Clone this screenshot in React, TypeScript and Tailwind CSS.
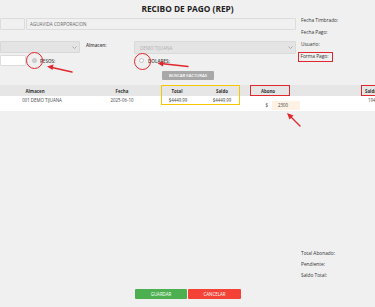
import React from "react";

function Chevron({ className = "" }: { className?: string }) {
  return (
    <svg className={className} width="5" height="3" viewBox="0 0 5 3" fill="none">
      <path d="M0.5 0.5 L2.5 2.5 L4.5 0.5" stroke="#9a9a9a" strokeWidth="0.7" />
    </svg>
  );
}

export default function App() {
  return (
    <div className="relative h-[307px] w-[375px] overflow-hidden bg-[#f0f0f0] font-['Open_Sans',sans-serif] text-[#333]">
      <div className="h-[17px] pt-[2px] text-center text-[8.3px] font-bold leading-[13px] text-[#222]">
        RECIBO DE PAGO (REP)
      </div>

      <div className="flex items-start">
        {/* left main */}
        <div className="w-[296px]">
          <div className="mt-[1px] flex h-[12px] gap-[1px]">
            <div className="w-[25px] rounded-[1px] border border-[#dcdcdc] bg-[#f0f0f0]" />
            <div className="flex flex-1 items-center rounded-[1px] border border-[#dcdcdc] bg-[#f0f0f0] pl-[3px] text-[4.6px] leading-[6px] text-[#666]">
              AGUAVIDA CORPORACION
            </div>
          </div>

          <div className="mt-[11px] flex h-[12px] items-start">
            <div className="flex h-[12px] w-[80px] items-center justify-end rounded-[1px] border border-[#d8d8d8] bg-[#e4e4e4] pr-[2px]">
              <Chevron />
            </div>
            <div className="w-[54px] pl-[6px] pt-[1px] text-[4.6px] font-semibold leading-[6px] text-[#444]">Almacen:</div>
            <div className="flex h-[13px] flex-1 items-center justify-between rounded-[1px] border border-[#dadada] bg-[#e4e4e4] pl-[5px] pr-[2px] text-[4.6px] leading-[6px] text-[#b0b0b0]">
              <span>DEMO TIJUANA</span>
              <Chevron />
            </div>
          </div>

          <div className="mt-[2px] flex h-[11px] items-center">
            <div className="h-[11px] w-[26px] rounded-[1px] border border-[#dcdcdc] bg-white" />
            <div className="flex w-[113px] items-center">
              <div className="ml-[6px] h-[5px] w-[5px] rounded-full border border-[#c4c4c4] bg-[#cfcfcf]" />
              <span className="ml-[3px] text-[4.6px] font-semibold leading-[6px] text-[#444]">PESOS:</span>
            </div>
            <div className="h-[5px] w-[5px] rounded-full border border-[#c4c4c4] bg-white" />
            <span className="ml-[4px] text-[4.6px] font-semibold leading-[6px] text-[#444]">DOLARES:</span>
          </div>

          <div className="ml-[162px] mt-[5px] flex h-[9px] w-[52px] items-center justify-center rounded-[1px] bg-[#a8a8a8] text-[4.2px] font-semibold leading-[5px] text-white">
            BUSCAR FACTURAS
          </div>
        </div>

        {/* right column */}
        <div className="flex-1 pl-[2px] text-[4.8px] leading-[8px] text-[#333]">
          <div className="-mt-[1px] h-[8px] pl-[3px]">Fecha Timbrado:</div>
          <div className="mt-[4px] h-[8px] pl-[3px]">Fecha Pago:</div>
          <div className="mt-[3.5px] h-[8px] pl-[3px]">Usuario:</div>
          <div className="mt-[4.5px] h-[10px] w-[35px] border-[1.5px] border-[#e0282e] pl-[1.5px] leading-[7px]">Forma Pago:</div>
        </div>
      </div>

      {/* table */}
      <div className="relative mt-[5px] w-[375px] overflow-hidden whitespace-nowrap">
        <div className="flex h-[11px] items-center bg-[#e6e6e6] text-[4.4px] font-bold leading-[6px] text-[#333]">
          <div className="w-[84px] shrink-0 pr-[14px] text-center">Almacen</div>
          <div className="w-[76px] shrink-0 text-center">Fecha</div>
          <div className="w-[36px] shrink-0 pr-[2px] text-center">Total</div>
          <div className="w-[52px] shrink-0 text-center">Saldo</div>
          <div className="w-[52px] shrink-0 pr-[12px] text-center">Abono</div>
          <div className="w-[61px] shrink-0" />
          <div className="shrink-0 pl-[4px]">Saldo</div>
        </div>
        <div className="flex h-[15px] items-start bg-white text-[4.4px] leading-[5px] text-[#444]">
          <div className="w-[84px] shrink-0 pt-[1.5px] text-center">001 DEMO TIJUANA</div>
          <div className="w-[76px] shrink-0 pt-[1.5px] text-center">2025-06-10</div>
          <div className="w-[36px] shrink-0 pt-[1.5px] text-center">$4449.99</div>
          <div className="w-[52px] shrink-0 pt-[1.5px] text-center">$4449.99</div>
          <div className="flex w-[52px] shrink-0 items-center justify-end pt-[5px]">
            <span className="mr-[4px]">$</span>
            <div className="flex h-[9px] w-[28px] items-center bg-[#fdf2e4] pl-[6px]">2300</div>
          </div>
          <div className="w-[61px] shrink-0" />
          <div className="shrink-0 pl-[7px] pt-[1.5px]">1940.00</div>
        </div>

        <div className="absolute left-[161px] top-0 h-[20px] w-[79px] border-[1.5px] border-[#f7c600]" />
        <div className="absolute left-[250px] top-0 h-[11px] w-[40px] border-[1.5px] border-[#e0282e]" />
        <div className="absolute left-[361px] top-0 h-[11px] w-[24px] border-[1.5px] border-[#e0282e]" />
      </div>

      {/* totals */}
      <div className="mt-[138px] pl-[301px] text-[4.8px] leading-[8px] text-[#333]">
        <div className="h-[8px]">Total Abonado:</div>
        <div className="mt-[3px] h-[8px]">Pendiente:</div>
        <div className="mt-[3px] h-[8px]">Saldo Total:</div>
      </div>

      <div className="ml-[135px] mt-[10px] flex h-[10px] gap-[1px] text-[4.4px] leading-[5px] text-white">
        <div className="flex w-[52px] items-center justify-center rounded-[1px] bg-[#4caf50]">GUARDAR</div>
        <div className="flex w-[53px] items-center justify-center rounded-[1px] bg-[#f44336]">CANCELAR</div>
      </div>

      {/* annotations */}
      <div className="absolute left-[26px] top-[52px] h-[17px] w-[17px] rounded-full border-[1.5px] border-[#e0282e]" />
      <div className="absolute left-[134px] top-[53px] h-[17px] w-[17px] rounded-full border-[1.5px] border-[#e0282e]" />
      <svg className="pointer-events-none absolute left-0 top-0" width="375" height="307" viewBox="0 0 375 307">
        <g stroke="#e0282e" strokeWidth="1.4" strokeLinecap="round" fill="#e0282e">
          <line x1="72" y1="72" x2="52" y2="67.5" />
          <polygon points="47,66.5 53.5,64.5 52.5,70" stroke="none" />
          <line x1="188" y1="66.5" x2="163" y2="63.8" />
          <polygon points="157.5,63.2 163.5,61 163,66.5" stroke="none" />
          <line x1="300" y1="126" x2="291" y2="117" />
          <polygon points="287,113 293.5,115.5 289.5,119.5" stroke="none" />
        </g>
      </svg>
    </div>
  );
}
